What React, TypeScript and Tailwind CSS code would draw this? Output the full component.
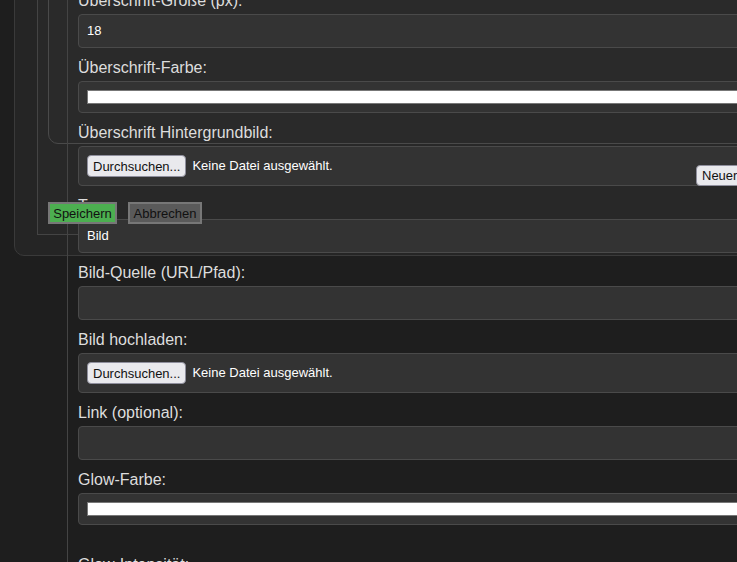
import type { ReactNode } from "react";

const Field = ({ label, children, className = "mb-[10px]" }: { label: string; children?: ReactNode; className?: string }) => (
  <div className={className}>
    <div className="mb-[4px] h-[19px] whitespace-nowrap text-[16px] leading-[19px] text-[#dddddd]">{label}</div>
    {children}
  </div>
);

const TextBox = ({ value = "" }: { value?: string }) => (
  <div className="flex h-[34px] w-[700px] items-center rounded-[4px] border border-[#4a4a4a] bg-[#333333] px-[8px] text-[13px] text-white">
    {value}
  </div>
);

const ColorBox = () => (
  <div className="h-[32px] w-[700px] rounded-[4px] border border-[#4a4a4a] bg-[#333333] p-[8px]">
    <div className="h-full w-full border border-[#777777] bg-white" />
  </div>
);

const FileBox = () => (
  <div className="flex h-[40px] w-[700px] items-center gap-[6px] rounded-[4px] border border-[#4a4a4a] bg-[#333333] px-[8px]">
    <button className="h-[22px] rounded-[4px] border border-[#8f8f9d] bg-[#e9e9ed] px-[5px] text-[13px] leading-none text-[#111]">
      Durchsuchen...
    </button>
    <span className="text-[13px] text-white">Keine Datei ausgewählt.</span>
  </div>
);

export default function App() {
  return (
    <div className="relative h-screen w-full overflow-hidden bg-[#1e1e1e] font-['Liberation_Sans',Arial,sans-serif]">
      {/* nested editor panels behind the form */}
      <div className="absolute left-[14px] top-[-40px] h-[296px] w-[900px] rounded-bl-[10px] border border-[#3a3a3a] bg-[#252525]" />
      <div className="absolute left-[37px] top-[-40px] h-[275px] w-[900px] border border-[#444444] bg-[#282828]" />
      <div className="absolute left-[48px] top-[-40px] h-[184px] w-[900px] rounded-bl-[10px] border border-[#4a4a4a] bg-[#2a2a2a]" />

      {/* Form column */}
      <div className="relative ml-[67px] mt-[-9px] min-h-[620px] w-[800px] border-l border-[#444444] pl-[10px]">
        <Field label="Überschrift-Größe (px):">
          <TextBox value="18" />
        </Field>
        <Field label="Überschrift-Farbe:">
          <ColorBox />
        </Field>
        <Field label="Überschrift Hintergrundbild:">
          <FileBox />
        </Field>
        <Field label="Typ:">
          <TextBox value="Bild" />
        </Field>
        <Field label="Bild-Quelle (URL/Pfad):">
          <TextBox />
        </Field>
        <Field label="Bild hochladen:">
          <FileBox />
        </Field>
        <Field label="Link (optional):">
          <TextBox />
        </Field>
        <Field label="Glow-Farbe:" className="mb-[30px]">
          <ColorBox />
        </Field>
        <Field label="Glow-Intensität:">
          <TextBox />
        </Field>
      </div>

      {/* Buttons lying over the form */}
      <button className="absolute left-[696px] top-[165px] h-[21px] whitespace-nowrap rounded-[4px] border border-[#8f8f9d] bg-[#e9e9ed] px-[5px] text-[13px] leading-none text-[#111]">
        Neuer Abschnitt
      </button>
      <div className="absolute left-[48px] top-[202px] flex gap-[11px]">
        <button className="h-[22px] w-[69px] border-2 border-[#777777] bg-[#4caf50] text-[13px] leading-none text-[#111]">
          Speichern
        </button>
        <button className="h-[22px] w-[74px] border-2 border-[#777777] bg-[#5a5a5a] text-[13px] leading-none text-[#111]">
          Abbrechen
        </button>
      </div>
    </div>
  );
}
